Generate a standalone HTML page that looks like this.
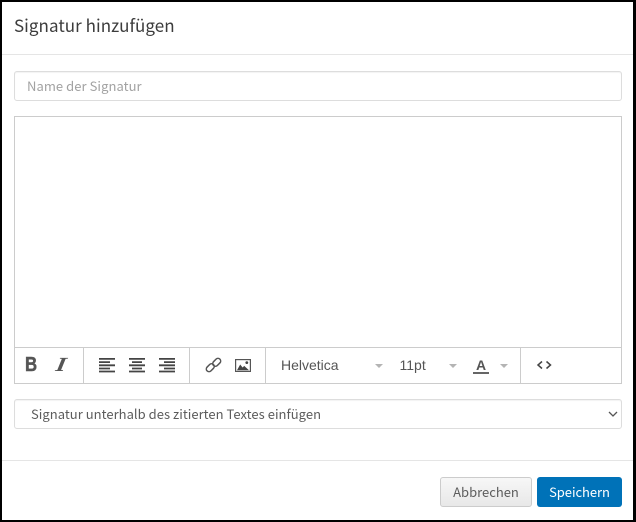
<!DOCTYPE html>
<html><head><meta charset="utf-8">
<style>
html,body{margin:0;padding:0;background:#fff}
body{width:636px;height:522px;position:relative;overflow:hidden;font-family:"Noto Sans CJK JP","Liberation Sans",sans-serif;color:#555}
.a{position:absolute;box-sizing:border-box}
.t{position:absolute;white-space:nowrap;line-height:20px}
.caret{position:absolute;width:0;height:0;border-left:4.5px solid transparent;border-right:4.5px solid transparent;border-top:4px solid #b4b4b4}
svg{position:absolute;overflow:visible}
</style></head><body>
<div class="a" style="left:0;top:0;width:636px;height:522px;border:solid #000;border-width:2px 3px 2px 2px;z-index:5;pointer-events:none"></div>
<div class="t" style="left:14px;top:15px;font-size:17px;letter-spacing:.05px;color:#3c3c3c">Signatur hinzufügen</div>
<div class="a" style="left:2px;top:54px;width:631px;height:1px;background:#e5e5e5"></div>

<div class="a" style="left:14px;top:71px;width:608px;height:30px;border:1px solid #ddd;border-radius:3px;box-shadow:inset 0 1px 1px rgba(0,0,0,.05)"></div>
<div class="t" style="left:27px;top:76px;font-size:13px;letter-spacing:.06px;color:#a2a2a2">Name der Signatur</div>

<div class="a" style="left:14px;top:116px;width:608px;height:268px;border:1px solid #ccc"></div>
<div class="a" style="left:14px;top:347px;width:608px;height:1px;background:#ccc"></div>
<div class="a" style="left:83px;top:347px;width:1px;height:36px;background:#ccc"></div>
<div class="a" style="left:189px;top:347px;width:1px;height:36px;background:#ccc"></div>
<div class="a" style="left:265px;top:347px;width:1px;height:36px;background:#ccc"></div>
<div class="a" style="left:520px;top:347px;width:1px;height:36px;background:#ccc"></div>

<div class="t" style="left:24.5px;top:355px;font:bold 20px/20px 'Liberation Sans',sans-serif;color:#555;-webkit-text-stroke:.5px #555;transform:scaleX(.84);transform-origin:0 50%">B</div>
<div class="t" style="left:56px;top:355px;font:italic bold 20px/20px 'Liberation Serif',serif;color:#555;transform:skewX(-10deg) scaleX(1.3);transform-origin:0 50%">I</div>

<svg style="left:99px;top:358px" width="17" height="15" fill="#444"><path d="M0 0h16v1.8H0zM0 3.2h11v1.8H0zM0 6.4h16v1.8H0zM0 9.6h11v1.8H0zM0 12.6h16v1.8H0z"/></svg>
<svg style="left:129px;top:358px" width="17" height="15" fill="#444"><path d="M0 0h16v1.8H0zM3 3.2h10v1.8H3zM0 6.4h16v1.8H0zM3 9.6h10v1.8H3zM0 12.6h16v1.8H0z"/></svg>
<svg style="left:159px;top:358px" width="17" height="15" fill="#444"><path d="M0 0h16v1.8H0zM5 3.2h11v1.8H5zM0 6.4h16v1.8H0zM5 9.6h11v1.8H5zM0 12.6h16v1.8H0z"/></svg>

<svg style="left:205px;top:357px" width="17" height="16" fill="none" stroke="#555" stroke-width="1.5"><rect x="7.2" y="2.6" width="9" height="5.4" rx="2.7" transform="rotate(-45 11.7 5.3)"/><rect x=".8" y="8" width="9" height="5.4" rx="2.7" transform="rotate(-45 5.3 10.7)"/></svg>
<svg style="left:235px;top:359px" width="16" height="13"><rect x=".6" y=".6" width="14.8" height="11.8" fill="#fff" stroke="#555" stroke-width="1.2"/><path d="M2 11.2l3.2-5.7 2.4 3 1.6-1.6 4.8 4.3z" fill="#444"/><circle cx="11.8" cy="3.6" r="1.4" fill="#444"/></svg>

<div class="t" style="left:281px;top:355px;font:14px/20px 'Liberation Sans',sans-serif;color:#555">Helvetica</div>
<div class="caret" style="left:375px;top:364px"></div>
<div class="t" style="left:399.5px;top:355px;font:14px/20px 'Liberation Sans',sans-serif;color:#555">11pt</div>
<div class="caret" style="left:449px;top:364px"></div>
<div class="t" style="left:476px;top:355px;font:bold 14px/20px 'Liberation Sans',sans-serif;color:#555">A</div>
<div class="a" style="left:473px;top:372px;width:16px;height:2px;background:#666"></div>
<div class="caret" style="left:500px;top:364px"></div>
<svg style="left:537px;top:361px" width="15" height="8" fill="none" stroke="#444" stroke-width="1.5"><path d="M5 .5L1 4l4 3.5M9.5 .5L13.5 4l-4 3.5"/></svg>

<div class="a" style="left:14px;top:399px;width:608px;height:30px;border:1px solid #ddd;border-radius:3px;box-shadow:inset 0 1px 1px rgba(0,0,0,.05)"></div>
<div class="t" style="left:31px;top:404px;font-size:13px;letter-spacing:.03px;color:#5c5c5c">Signatur unterhalb des zitierten Textes einfügen</div>
<svg style="left:608px;top:411px" width="10" height="7" fill="none" stroke="#555" stroke-width="1.3"><path d="M1 1l4 4 4-4"/></svg>

<div class="a" style="left:2px;top:460px;width:631px;height:1px;background:#e5e5e5"></div>
<div class="a" style="left:440px;top:477px;width:92px;height:30px;border:1px solid #ccc;border-radius:3px;background:linear-gradient(#f7f7f7,#e8e8e8)"></div>
<div class="t" style="left:440px;top:482px;width:92px;text-align:center;font-size:13px;color:#5c5c5c">Abbrechen</div>
<div class="a" style="left:537px;top:477px;width:85px;height:30px;border-radius:3px;background:#0072b8"></div>
<div class="t" style="left:537px;top:482px;width:85px;text-align:center;font-size:13px;letter-spacing:-.05px;color:#fff">Speichern</div>
</body></html>
